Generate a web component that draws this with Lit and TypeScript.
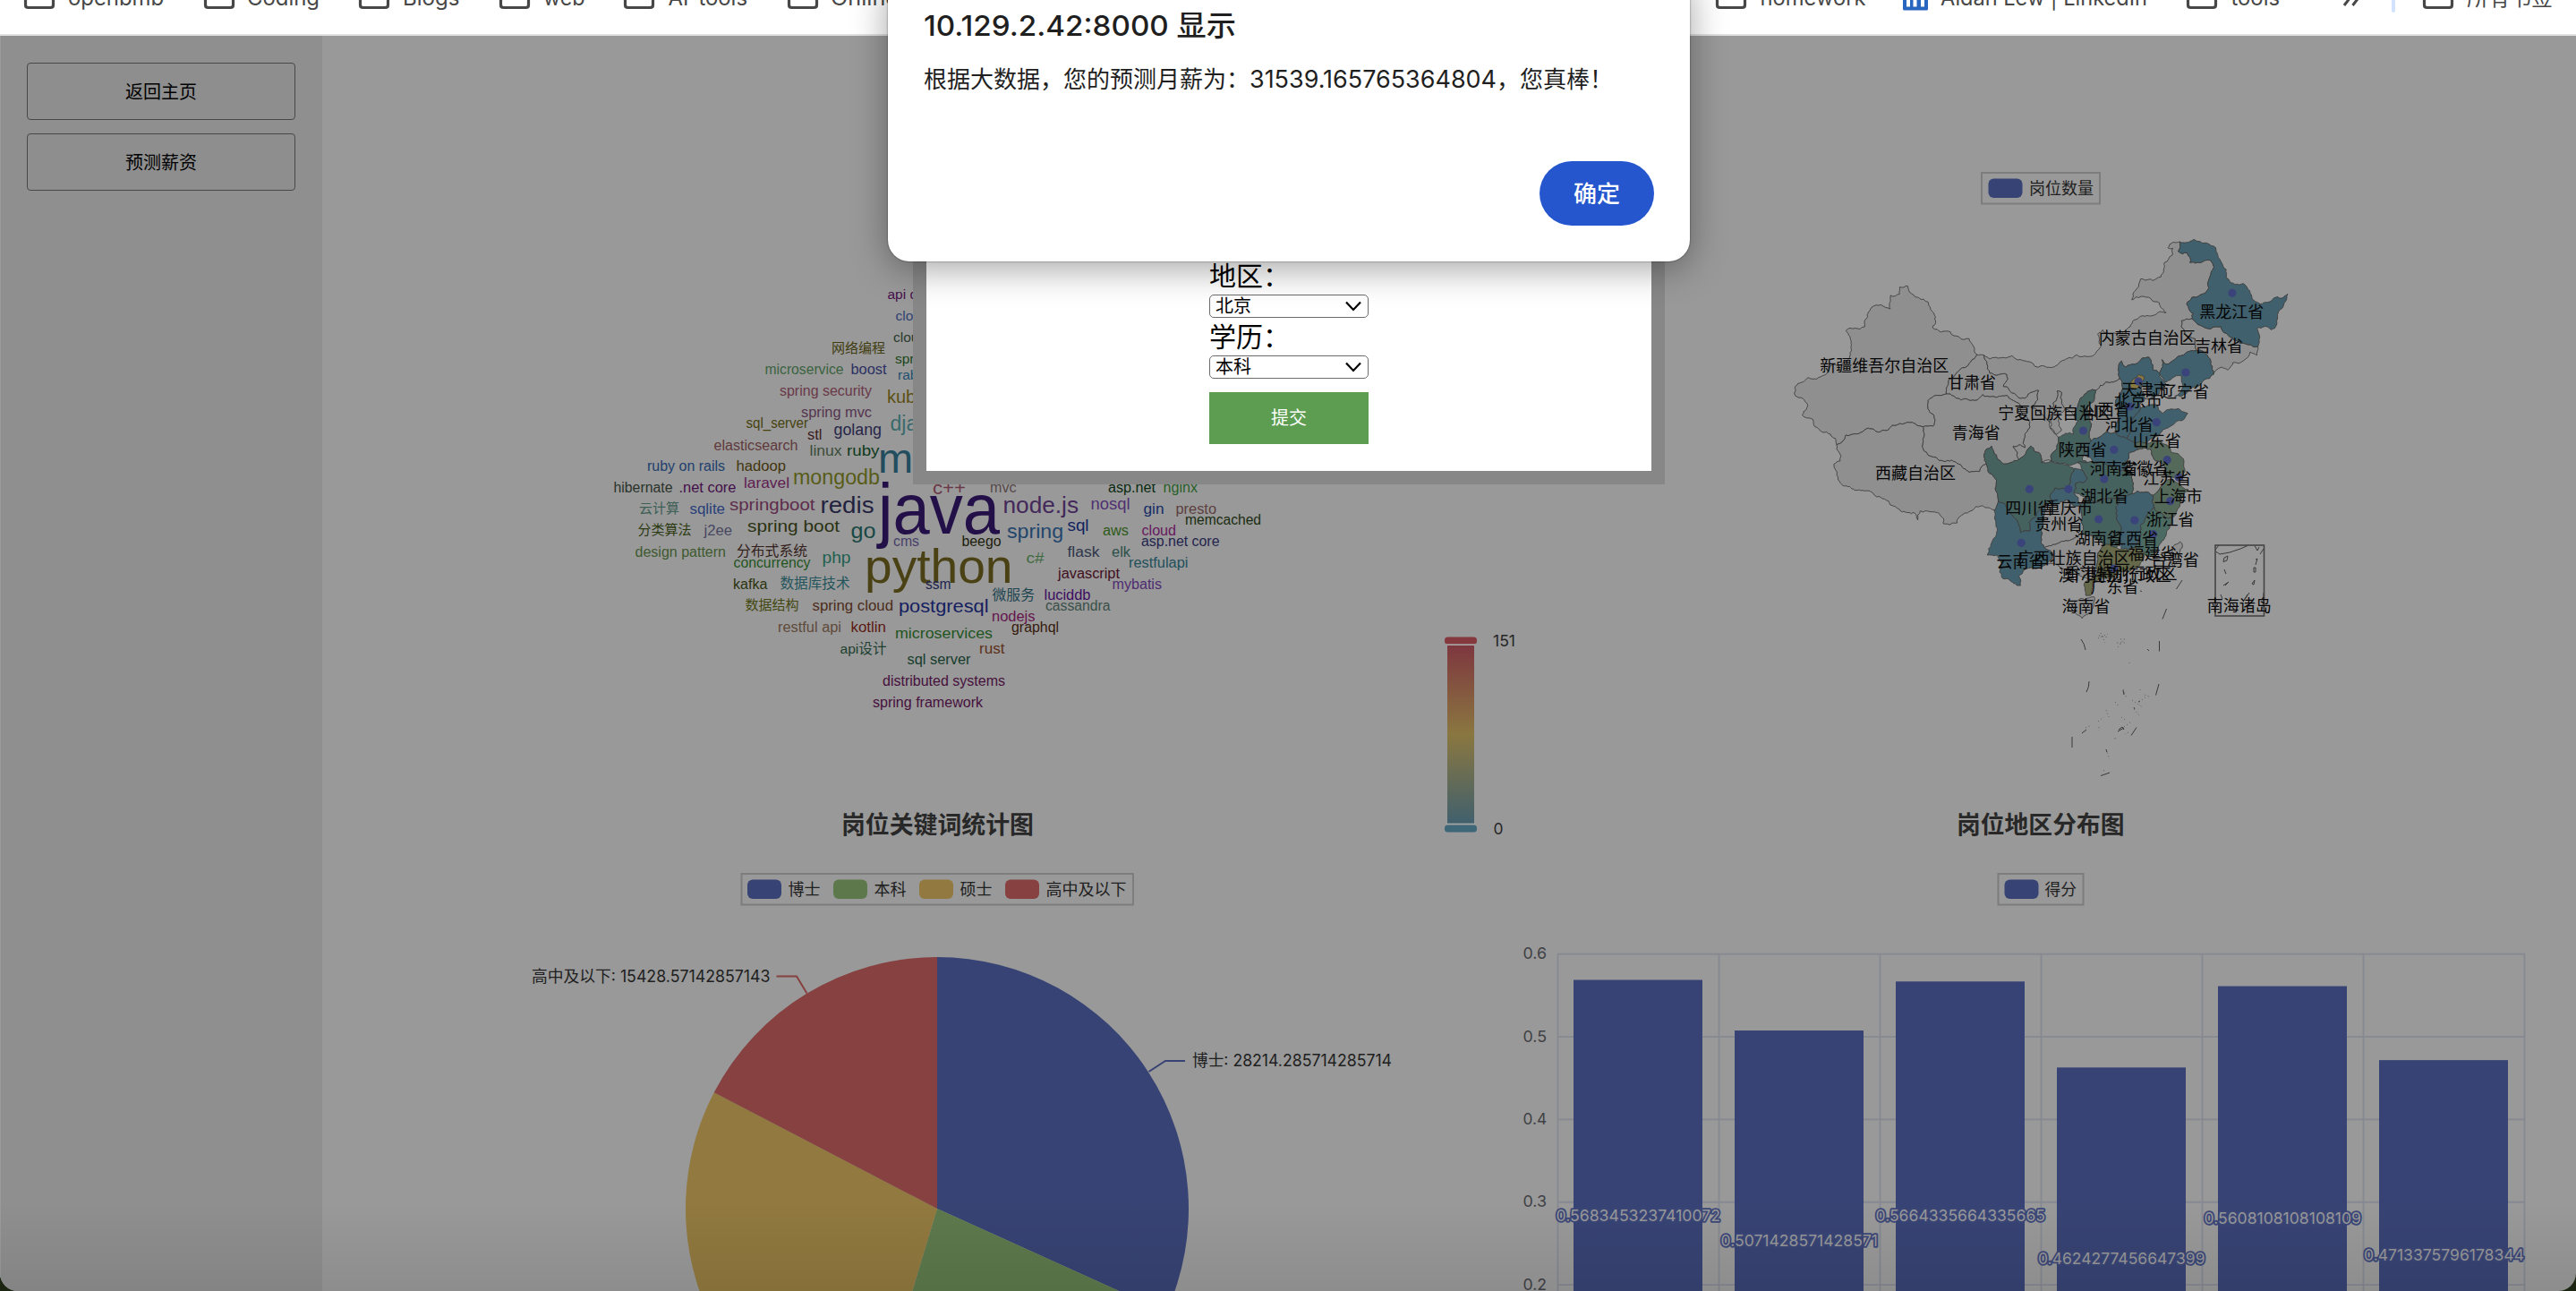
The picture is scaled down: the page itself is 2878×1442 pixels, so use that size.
import { LitElement, html, svg, css } from "lit";
import { customElement } from "lit/decorators.js";

/* ---------- shared helpers ---------- */

type Word = [text: string, x0: number, x1: number, baseline: number, size: number, color: string];

/** Text run that starts at x0 and, when x1 is given, is fitted to end at x1. */
const run = (t: string, x0: number, x1: number, y: number, size: number, color: string, cls = "t") =>
  x1 > 0
    ? svg`<text class=${cls} x=${x0} y=${y} font-size=${size} fill=${color} textLength=${x1 - x0} lengthAdjust="spacingAndGlyphs">${t}</text>`
    : svg`<text class=${cls} x=${x0} y=${y} font-size=${size} fill=${color}>${t}</text>`;

const chartText = css`
  :host { display: block; }
  svg { display: block; }
  .t { font-family: Inter, "Noto Sans CJK SC", sans-serif; }
  .w { font-family: "Liberation Sans", "Noto Sans CJK SC", sans-serif; stroke: currentColor; stroke-width: 0; }
  .title { font-family: Inter, "Noto Sans CJK SC", sans-serif; font-weight: 700; }
  .value { font-family: Inter, "Noto Sans CJK SC", sans-serif; paint-order: stroke; stroke: #3b4778; stroke-width: 3.6px; stroke-linejoin: round; }
`;

const BLUE = "#374374";
const GREEN = "#5d794c";
const YELLOW = "#91793f";
const RED = "#864140";

interface LegendEntry { label: string; color: string; x: number; tx: number; tx1: number }

const legend = (x: number, y: number, w: number, h: number, entries: LegendEntry[]) => svg`
  <rect x=${x} y=${y} width=${w} height=${h} fill="none" stroke="#7d7d7d" stroke-width="2"></rect>
  ${entries.map((e) => svg`
    <rect x=${e.x} y=${y + 6.5} width="38" height="21.5" rx="6" fill=${e.color}></rect>
    ${run(e.label, e.tx, e.tx1, y + 23.6, 18, "#202020")}`)}
`;

/* ---------- word cloud ---------- */

const WORDS: Word[] = [
  ["api design", 991.5, 0, 334, 15.5, "#46104c"],
  ["cloud native", 1000.5, 0, 358, 15.5, "#2f4270"],
  ["cloud computing", 998, 0, 382, 15.5, "#2a3a2e"],
  ["网络编程", 929, 989, 393.5, 15, "#3f3c10"],
  ["spring data", 1000, 0, 406, 15.5, "#1a4518"],
  ["microservice", 854.5, 942.5, 418, 15.8, "#3a6340"],
  ["boost", 950.5, 990.5, 418, 15.8, "#2a3062"],
  ["rabbitmq", 1003, 0, 424, 15.5, "#23506e"],
  ["spring security", 871, 974, 442, 15.8, "#6a3848"],
  ["kubernetes", 991, 0, 449.7, 20, "#5d5013"],
  ["spring mvc", 895, 974, 466, 15.8, "#54344f"],
  ["sql_server", 833.5, 903, 478, 15.8, "#46430f"],
  ["stl", 902, 918.5, 490.5, 15.8, "#3a1a20"],
  ["golang", 931.5, 985, 486, 18, "#26264a"],
  ["django", 994.5, 0, 481, 23, "#3b6a6c"],
  ["elasticsearch", 797.5, 891.5, 502.5, 15.8, "#5f3a3c"],
  ["linux", 904.5, 940.5, 509, 17, "#3a4d3a"],
  ["ruby", 946, 982.5, 509, 17, "#0f3a1c"],
  ["mysql", 981, 0, 527.5, 47, "#214d5e"],
  ["ruby on rails", 723, 810, 526, 15.8, "#20406e"],
  ["hadoop", 822.5, 878, 526, 15.8, "#42350e"],
  ["laravel", 831, 882, 544.5, 17, "#5f1d52"],
  ["mongodb", 886, 983, 541, 23, "#585c18"],
  ["hibernate", 685.5, 751.5, 550, 15.8, "#2a332a"],
  [".net core", 758.5, 822.5, 550, 15.8, "#44104a"],
  ["云计算", 714, 759, 572.5, 15, "#3d5f56"],
  ["sqlite", 770.5, 810, 574, 15.8, "#28407a"],
  ["springboot", 815, 910.5, 569.7, 19, "#5d2c4c"],
  ["redis", 916.5, 976.5, 572.7, 25, "#22223f"],
  ["java", 981, 1117, 595.7, 79, "#241048"],
  ["c++", 1042, 1079, 552, 20, "#6b3848"],
  ["分类算法", 712.5, 772.5, 596.5, 15, "#2c3a12"],
  ["j2ee", 786.5, 818, 598, 15.8, "#474762"],
  ["spring boot", 835, 938, 594, 19, "#2a3212"],
  ["go", 950.5, 978.5, 601, 23, "#184844"],
  ["cms", 998, 1027, 610, 15.8, "#473f6a"],
  ["design pattern", 709.5, 811, 622, 15.8, "#3e5a30"],
  ["分布式系统", 823, 902, 621, 15.6, "#33201a"],
  ["concurrency", 819.5, 905.5, 634, 15.8, "#1f5520"],
  ["php", 918.5, 950.5, 629, 18, "#1f6050"],
  ["python", 966, 1131.5, 651, 54, "#4a4214"],
  ["kafka", 819, 857.5, 658, 15.8, "#2a340f"],
  ["数据库技术", 871.5, 949.5, 657, 15.6, "#24555c"],
  ["ssm", 1034, 1062.5, 658, 15.8, "#1c2450"],
  ["数据结构", 832.5, 892.5, 681, 15, "#42480f"],
  ["spring cloud", 907.5, 998, 682, 15.8, "#4c2c1a"],
  ["postgresql", 1004, 1104.5, 684, 19.5, "#152060"],
  ["restful api", 869, 940, 706, 15.8, "#5f4a3a"],
  ["kotlin", 950.5, 990, 706, 15.8, "#5c1a12"],
  ["microservices", 1000, 1109, 713, 17, "#1f551f"],
  ["api设计", 938.5, 990.5, 730, 15.5, "#1c4030"],
  ["sql server", 1013.5, 1084.5, 742, 15.8, "#163c2c"],
  ["distributed systems", 986, 1123, 766, 15.8, "#46103c"],
  ["spring framework", 975, 1098, 790, 15.8, "#46103c"],
  ["mvc", 1106, 1135.5, 550, 15.8, "#574848"],
  ["asp.net", 1238, 1291, 550, 15.8, "#0a2a10"],
  ["nginx", 1299.5, 1338, 550, 15.8, "#286028"],
  ["node.js", 1120.5, 1205, 572.7, 25, "#43285a"],
  ["nosql", 1218.5, 1262.5, 569, 18, "#4f2f72"],
  ["gin", 1277.5, 1300.5, 574, 15.8, "#142c66"],
  ["presto", 1313.5, 1359, 574, 15.8, "#5c4040"],
  ["memcached", 1324, 1409, 586, 15.8, "#1a2c10"],
  ["spring", 1125, 1188, 601, 22, "#22466c"],
  ["sql", 1192.5, 1216.5, 593, 18, "#0e2260"],
  ["aws", 1232, 1261, 598, 15.8, "#2e5a18"],
  ["cloud", 1275.5, 1314, 598, 15.8, "#66185e"],
  ["asp.net core", 1275, 1362.5, 610, 15.8, "#24244e"],
  ["beego", 1074.5, 1118.5, 610, 15.8, "#1c1c0c"],
  ["flask", 1192.5, 1228.5, 622, 15.8, "#2e364a"],
  ["elk", 1242, 1263, 622, 15.8, "#2c504a"],
  ["c#", 1146.5, 1166.5, 629, 17, "#3e6a40"],
  ["restfulapi", 1261, 1327.5, 634, 15.8, "#22505c"],
  ["javascript", 1182, 1251, 646, 15.8, "#420f20"],
  ["mybatis", 1242.5, 1298, 658, 15.8, "#4f2c72"],
  ["微服务", 1108.5, 1156, 669.5, 15.8, "#1e4450"],
  ["luciddb", 1166.5, 1218.5, 670, 15.8, "#3e0c62"],
  ["cassandra", 1168, 1240.5, 682, 15.8, "#3a5048"],
  ["nodejs", 1108, 1156.5, 694, 15.8, "#66144e"],
  ["graphql", 1130, 1183, 706, 15.8, "#361a0c"],
  ["rust", 1094, 1122.5, 730, 15.8, "#5c3018"],
];

@customElement("word-cloud")
export class WordCloud extends LitElement {
  static styles = chartText;
  render() {
    return html`<svg width="1230" height="900" viewBox="360 40 1230 900">
      ${WORDS.map(([t, x0, x1, y, s, c]) => run(t, x0, x1, y, s, c, "w"))}
      ${run("岗位关键词统计图", 940, 1155, 931, 26.8, "#282828", "title")}
    </svg>`;
  }
}

/* ---------- region map ---------- */

type Pt = [number, number];

/** Map drawing space to chart pixels. */
const proj = ([x, y]: Pt): Pt => [1980 + x / 2.6133, 250 + y / 3];

const noise = (x: number, y: number) => {
  const v = Math.sin(x * 12.9898 + y * 78.233) * 43758.5453;
  return v - Math.floor(v) - 0.5;
};

/** Midpoint displacement; independent of direction, so that neighbours share one border. */
function between(a: Pt, b: Pt, depth: number): Pt[] {
  const len = Math.hypot(b[0] - a[0], b[1] - a[1]);
  if (len < 3.2 || depth > 4) return [];
  const flip = a[0] > b[0] || (a[0] === b[0] && a[1] > b[1]);
  const [p, q] = flip ? [b, a] : [a, b];
  const k = noise(p[0] + q[0], p[1] + q[1]) * 0.36;
  const m: Pt = [(p[0] + q[0]) / 2 - (q[1] - p[1]) * k, (p[1] + q[1]) / 2 + (q[0] - p[0]) * k];
  return [...between(a, m, depth + 1), m, ...between(m, b, depth + 1)];
}

function outline(flat: string): string {
  const pts = flat.trim().split(/\s+/).map((s) => proj(s.split(",").map(Number) as Pt));
  const out: Pt[] = [];
  pts.forEach((p, i) => out.push(p, ...between(p, pts[(i + 1) % pts.length], 0)));
  return "M" + out.map(([x, y]) => `${x.toFixed(1)} ${y.toFixed(1)}`).join("L") + "Z";
}

const LAND = "#8f8f8f";
const LOW = "#3f606c";
const MID = "#46625f";
const HIGH = "#55695a";

const REGIONS: [fill: string, points: string][] = [
  [LAND, "372,212 395,208 400,228 428,248 455,262 472,300 468,348 520,362 575,385 598,438 580,462 540,498 518,520 508,570 455,592 455,620 475,655 470,678 440,680 410,665 350,675 310,698 270,690 215,708 188,740 170,705 125,680 118,655 88,640 100,600 65,570 75,535 105,515 130,520 165,480 225,450 230,400 215,358 270,345 272,320 290,280 345,285 345,240 372,235"],
  [LAND, "188,740 215,708 270,690 310,698 350,675 410,665 440,680 440,735 455,775 500,795 545,805 575,832 605,830 625,805 655,860 660,930 648,960 615,945 580,962 560,970 540,1002 500,1005 498,985 470,965 432,962 425,992 415,968 380,965 345,942 305,915 278,895 240,892 190,845 180,805 198,795 195,765"],
  [LAND, "598,438 618,440 635,500 685,505 688,520 675,545 725,585 755,565 778,558 775,590 755,615 790,640 810,665 820,695 835,715 835,735 820,765 815,795 785,800 782,770 755,745 740,770 720,790 703,745 720,740 738,750 735,720 752,680 745,650 725,610 700,590 685,575 650,580 615,572 590,592 550,590 520,570 508,570 518,520 540,498 580,462"],
  [LAND, "455,592 508,570 520,570 550,590 590,592 615,572 650,580 685,575 700,590 725,610 745,650 752,680 735,720 738,750 720,740 703,745 720,790 695,800 670,800 655,775 640,745 625,755 625,805 605,830 575,832 545,805 500,795 455,775 440,735 440,680 470,678 475,655 455,620"],
  [LAND, "618,440 700,442 750,462 797,478 860,452 920,445 960,410 950,370 965,355 1010,365 1045,345 1075,310 1125,298 1150,298 1130,265 1105,250 1050,255 1055,230 1075,185 1110,190 1135,178 1145,130 1168,105 1170,82 1155,80 1170,62 1190,60 1185,92 1212,98 1220,130 1280,122 1290,145 1275,185 1275,215 1250,238 1210,270 1230,300 1225,318 1195,325 1205,370 1235,385 1240,425 1200,440 1150,470 1138,455 1130,500 1112,490 1100,447 1080,450 1060,470 1032,480 1020,460 1010,490 1015,520 975,530 945,558 910,575 895,600 880,640 855,620 845,600 845,565 832,560 820,600 828,630 808,640 810,665 790,640 755,615 775,590 778,558 755,565 725,585 675,545 688,520 685,505 635,500"],
  [LAND, "832,560 845,565 845,600 855,620 835,660 845,690 830,705 812,685 808,640 828,630 820,600"],
  [LAND, "1225,318 1250,340 1310,345 1320,365 1350,390 1390,405 1418,412 1415,440 1395,430 1380,455 1345,465 1330,490 1312,480 1288,505 1280,470 1270,440 1240,425 1235,385 1205,370 1195,325"],
  [LAND, "945,558 975,530 1015,520 1022,545 1020,570 1002,600 1010,650 1005,700 960,712 930,730 925,700 932,670 920,620 940,590"],
  [LAND, "1070,755 1105,755 1115,790 1135,800 1150,840 1150,860 1135,880 1110,910 1085,900 1050,905 1055,870 1035,820 1035,800 1040,770"],
  [LAND, "790,945 820,940 860,925 880,945 900,940 905,990 905,1035 880,1055 835,1070 795,1085 785,1050 790,1000 800,960"],
  [LAND, "795,1085 835,1070 880,1055 905,1035 950,1055 965,1080 950,1110 950,1160 930,1190 900,1180 850,1170 840,1150 800,1140 820,1110"],
  [LOW, "1190,60 1230,52 1270,65 1295,80 1312,130 1325,180 1340,198 1375,200 1395,225 1410,260 1450,262 1465,248 1505,235 1495,265 1480,290 1475,320 1458,355 1415,350 1418,412 1390,405 1350,390 1320,365 1310,345 1250,340 1225,318 1230,300 1210,270 1250,238 1275,215 1275,185 1290,145 1280,122 1220,130 1212,98 1185,92"],
  [LOW, "1240,425 1270,440 1280,470 1288,505 1240,545 1195,578 1175,578 1200,545 1195,510 1175,512 1150,530 1130,500 1138,455 1150,470 1200,440"],
  [LOW, "1010,490 1020,460 1032,480 1060,470 1080,450 1100,447 1112,490 1130,500 1150,540 1130,570 1090,585 1075,620 1055,650 1050,670 1045,690 1035,720 1005,700 1010,650 1002,600 1020,570 1022,545 1015,520"],
  ["#877940", "1045,540 1055,520 1070,505 1088,515 1080,540 1065,552 1048,550"],
  [LAND, "1080,540 1100,545 1110,580 1088,585 1078,560"],
  [MID, "945,558 940,590 920,620 932,670 925,700 930,730 910,775 905,790 920,800 890,800 840,805 815,795 820,765 835,735 835,715 880,705 895,660 880,640 895,600 910,575"],
  [LOW, "1055,650 1075,620 1120,605 1140,635 1165,620 1200,630 1213,635 1205,650 1160,680 1130,710 1090,735 1060,735 1035,720 1045,690 1050,670"],
  [LOW, "930,730 960,712 1005,700 1035,720 1060,735 1070,755 1040,770 1035,800 1035,820 985,810 940,800 910,775"],
  [HIGH, "1060,735 1090,735 1110,730 1150,740 1185,770 1205,830 1200,860 1170,850 1150,840 1135,800 1115,790 1105,755 1070,755"],
  [HIGH, "1135,880 1150,860 1190,870 1215,890 1195,920 1190,945 1165,985 1135,970 1115,950 1110,910"],
  [MID, "890,800 920,800 940,800 985,810 1035,820 1055,870 1050,905 1010,915 985,920 920,920 880,900 885,870 920,855 905,825"],
  [LOW, "880,820 905,825 920,855 885,870 880,900 900,940 880,945 860,925 820,940 812,905 825,885 860,882 870,860"],
  [MID, "625,755 640,745 655,775 670,800 695,800 720,790 740,770 755,745 782,770 785,800 840,805 880,820 870,860 860,882 825,885 812,905 820,940 790,945 770,980 750,1000 752,1030 725,1035 700,975 660,930 655,860 625,805"],
  [MID, "900,940 920,920 985,920 1010,915 1005,990 1015,1060 1005,1085 965,1080 950,1055 905,1035 905,990"],
  [LOW, "1010,915 1050,905 1085,900 1110,910 1115,950 1095,975 1075,1010 1070,1060 1060,1085 1020,1090 1015,1060 1005,990"],
  ["#4a6a62", "1115,950 1135,970 1165,985 1160,1020 1145,1055 1125,1090 1100,1115 1085,1100 1060,1085 1070,1060 1075,1010 1095,975"],
  ["#66694a", "965,1080 1005,1085 1020,1090 1060,1085 1085,1100 1080,1130 1060,1150 1030,1165 1005,1175 985,1190 950,1195 935,1205 930,1245 915,1245 910,1210 930,1190 950,1160 950,1110"],
  [LOW, "660,930 700,975 725,1035 752,1030 750,1000 770,980 790,945 800,960 790,1000 785,1050 795,1085 820,1110 800,1140 765,1155 735,1160 720,1180 725,1212 705,1205 670,1185 668,1150 655,1110 628,1110 640,1070 655,1040 650,990 648,960"],
  [LAND, "885,1265 940,1250 935,1290 905,1322 885,1305 875,1280"],
  [LAND, "1190,1065 1198,1080 1185,1130 1175,1150 1165,1110 1175,1075"],
];

const REGION_LABELS: [string, number, number][] = [
  ["新疆维吾尔自治区", 142, 495], ["甘肃省", 515, 553], ["青海省", 527, 720], ["西藏自治区", 303, 855],
  ["宁夏回族自治区", 662, 654], ["内蒙古自治区", 956, 403], ["黑龙江省", 1250, 315], ["吉林省", 1236, 430],
  ["辽宁省", 1137, 582], ["天津市", 1022, 575], ["北京市", 1000, 612], ["山西省", 906, 642],
  ["河北省", 975, 693], ["山东省", 1055, 747], ["陕西省", 838, 777], ["河南省", 930, 840],
  ["安徽省", 1020, 840], ["江苏省", 1085, 874], ["上海市", 1117, 933], ["湖北省", 902, 934],
  ["四川省", 683, 972], ["重庆市", 797, 972], ["浙江省", 1094, 1012], ["贵州省", 769, 1026],
  ["湖南省", 885, 1074], ["江西省", 988, 1075], ["福建省", 1042, 1125], ["台湾省", 1108, 1145],
  ["广西壮族自治区", 718, 1141], ["云南省", 657, 1152], ["澳门特别行政区", 838, 1196],
  ["香港特别行政区", 856, 1192], ["广东省", 932, 1237], ["海南省", 848, 1302], ["南海诸岛", 1272, 1300],
];

const DOTS: Pt[] = [
  [1343, 232], [1207, 498], [1069, 528], [1044, 612], [1122, 665], [908, 693], [998, 757], [1153, 791], [969, 855],
  [1187, 850], [751, 889], [865, 889], [1162, 929], [953, 990], [1058, 993], [1112, 1040], [727, 1069], [998, 1155],
];

const SEA_MARKS = `M2325 714Q2329 719 2330 726M2334 761Q2334 768 2331 773M2315 823V835M2347 866.500L2357 863
M2412.500 716V727.500M2412 764L2408.500 776.500M2387 812.500L2381 821.500M2420.500 680L2416 691.500M2438 648L2431.500 658
M2326 819L2331 815M2366 817L2373 813M2367 815L2371 812L2373 815M2399 725L2401 727M2372 771L2373 776
M2389 784L2391 783M2384 790L2385 792M2353 837L2354 840M2391 660L2393 660.500`;

const REEF_DOTS = `M2344 713L2355 708M2345 710L2356 712M2347 707L2352 718M2366 723L2373 714M2369 714H2376M2365 718L2375 718
M2363 784L2367 789M2372 770L2376 780M2390 784L2398 778M2382 782L2394 790M2384 792L2390 799M2353 793L2356 801
M2344 806L2350 801M2330 813L2337 810M2370 801L2374 804M2373 812L2381 806M2378 818L2374 820M2363 824V826
M2353 837L2357 848M2391 770V771M2396 776L2401 778M2345 812V816M2350 861L2352 860M2448 622L2453 618M2379 740V741`;

const INSET_MARKS = `M2475 614L2479 609M2475.500 616L2480 619L2491 617L2503 613L2511 609.500M2519 609.500L2522 615L2524 611
M2529 613L2525 619M2485 623L2489 621L2488 626L2484 627.500ZM2520 625L2522 624L2520 631M2485 636L2487 641
M2518 634H2520V639H2518ZM2484 654L2490 650L2486 654M2516 652L2519 648L2518 653ZM2481 664L2483 669
M2511 664L2506 672L2509 668L2513 662M2529 662L2528 680`;

@customElement("region-map")
export class RegionMap extends LitElement {
  static styles = [
    chartText,
    css`
      .region { stroke: #3e3e3e; stroke-width: 0.9; stroke-linejoin: round; }
      .mark { fill: none; stroke: #3a3a3a; stroke-width: 1; }
      .reef { fill: none; stroke: #5c5c5c; stroke-width: 0.9; stroke-dasharray: 1.2 2.6; }
      .inset { fill: none; stroke: #444; stroke-width: 1.6; }
      .dot { fill: #3a447a; }
    `,
  ];
  render() {
    return html`<svg width="1288" height="900" viewBox="1590 40 1288 900">
      <defs>
        <linearGradient id="scale" x1="0" y1="0" x2="0" y2="1">
          <stop offset="0" stop-color="#7e373f"></stop>
          <stop offset="0.5" stop-color="#8a7740"></stop>
          <stop offset="1" stop-color="#40606d"></stop>
        </linearGradient>
      </defs>
      ${legend(2214, 193, 132, 34.5, [{ label: "岗位数量", color: BLUE, x: 2221.5, tx: 2267, tx1: 2339 }])}

      <rect x="1614" y="711.500" width="36" height="8" rx="3.500" fill="#86383f"></rect>
      <rect x="1617" y="721" width="30" height="199" fill="url(#scale)"></rect>
      <rect x="1616" y="719.500" width="32" height="1.500" fill="#a6a0a0"></rect>
      <rect x="1616" y="919.600" width="32" height="1.500" fill="#a0a6a6"></rect>
      <rect x="1614" y="921.500" width="36" height="8" rx="3.500" fill="#3e6778"></rect>
      ${run("151", 1668, 1693, 722, 17.5, "#262626")}
      ${run("0", 1668.5, 1679.5, 931.5, 17.5, "#262626")}

      ${REGIONS.map(([fill, pts]) => svg`<path class="region" fill=${fill} d=${outline(pts)}></path>`)}
      ${DOTS.map((p) => { const [x, y] = proj(p); return svg`<circle class="dot" cx=${x} cy=${y} r="4.600"></circle>`; })}
      <path class="mark" d=${SEA_MARKS}></path>
      <path class="reef" d=${REEF_DOTS}></path>
      <path class="mark" d=${INSET_MARKS}></path>
      <rect class="inset" x="2475" y="609" width="54.500" height="79"></rect>
      ${REGION_LABELS.map(([t, lx, ly]) => { const [x, y] = proj([lx, ly]); return run(t, x - 1, 0, y, 18, "#050505"); })}
      ${run("岗位地区分布图", 2186, 2373.5, 931, 26.8, "#282828", "title")}
    </svg>`;
  }
}

/* ---------- salary pie ---------- */

@customElement("salary-pie")
export class SalaryPie extends LitElement {
  static styles = chartText;
  private slices: [number, number, string][] = [
    [0, 114.35, BLUE], [114.35, 196.8, GREEN], [196.8, 297.5, YELLOW], [297.5, 360, RED],
  ];
  private slice(a: number, b: number) {
    const cx = 1047, cy = 1350, r = 281;
    const at = (d: number) => {
      const t = (d * Math.PI) / 180;
      return `${(cx + r * Math.sin(t)).toFixed(2)} ${(cy - r * Math.cos(t)).toFixed(2)}`;
    };
    return `M${cx} ${cy}L${at(a)}A${r} ${r} 0 0 1 ${at(b)}Z`;
  }
  render() {
    return html`<svg width="1230" height="502" viewBox="360 940 1230 502">
      ${legend(828.5, 976, 437.5, 34.5, [
        { label: "博士", color: BLUE, x: 835, tx: 880.5, tx1: 916.5 },
        { label: "本科", color: GREEN, x: 931, tx: 976.5, tx1: 1012.5 },
        { label: "硕士", color: YELLOW, x: 1027, tx: 1072.5, tx1: 1108.5 },
        { label: "高中及以下", color: RED, x: 1123, tx: 1168.5, tx1: 1258.5 },
      ])}
      ${this.slices.map(([a, b, c]) => svg`<path d=${this.slice(a, b)} fill=${c}></path>`)}
      <path d="M867.500 1090.500H890L901.500 1109.500" fill="none" stroke=${RED} stroke-width="2"></path>
      <path d="M1324 1185H1302L1283.500 1197" fill="none" stroke=${BLUE} stroke-width="2"></path>
      ${run("高中及以下: 15428.57142857143", 594, 860.5, 1096.7, 18, "#202020")}
      ${run("博士: 28214.285714285714", 1332, 1555, 1190.7, 18, "#202020")}
    </svg>`;
  }
}

/* ---------- score bars ---------- */

@customElement("score-bars")
export class ScoreBars extends LitElement {
  static styles = chartText;
  private values: [string, number, number][] = [
    ["0.5683453237410072", 1738.5, 1922], ["0.5071428571428571", 1922.5, 2098],
    ["0.5664335664335665", 2095.5, 2285], ["0.4624277456647399", 2277, 2463.5],
    ["0.5608108108108109", 2462.5, 2638], ["0.4713375796178344", 2641, 2820],
  ];
  private y(v: number) { return 1065.7 + (0.6 - v) * 923.5; }
  render() {
    return html`<svg width="1288" height="502" viewBox="1590 940 1288 502">
      ${legend(2232.5, 976, 95, 34.5, [{ label: "得分", color: BLUE, x: 2239.5, tx: 2284.5, tx1: 2320 }])}
      ${[0.6, 0.5, 0.4, 0.3, 0.2].map((v) => svg`
        <line x1="1740" x2="2821" y1=${this.y(v)} y2=${this.y(v)} stroke="#868892" stroke-width="1.800"></line>
        ${run(v.toFixed(1), 1701.5, 1728, this.y(v) + 5.5, 17.8, "#404145")}`)}
      ${[0, 1, 2, 3, 4, 5, 6].map((i) => svg`
        <line x1=${1740.5 + i * 180} x2=${1740.5 + i * 180} y1="1065" y2="1442" stroke="#868892" stroke-width="1.800"></line>`)}
      ${this.values.map(([t], i) => svg`
        <rect x=${1758 + i * 180} y=${this.y(Number(t)) - 0.4} width="144" height="560" fill=${BLUE}></rect>`)}
      ${this.values.map(([t, x0, x1]) => run(t, x0, x1, (this.y(Number(t)) + this.y(0)) / 2 + 6.2, 17.8, "#989898", "value"))}
    </svg>`;
  }
}

/* ---------- page ---------- */

interface Bookmark { label: string; start: number; t0: number; t1: number; kind: "folder" | "linkedin" | "more" | "divider" }

const BOOKMARKS: Bookmark[] = [
  { label: "openbmb", start: 27, t0: 76, t1: 183, kind: "folder" },
  { label: "Coding", start: 228, t0: 276, t1: 357, kind: "folder" },
  { label: "Blogs", start: 401, t0: 450, t1: 513.5, kind: "folder" },
  { label: "web", start: 557.5, t0: 606.5, t1: 653, kind: "folder" },
  { label: "AI-tools", start: 697, t0: 746.5, t1: 835, kind: "folder" },
  { label: "Online", start: 880, t0: 928, t1: 1004, kind: "folder" },
  { label: "homework", start: 1916.5, t0: 1966, t1: 2084, kind: "folder" },
  { label: "Aidan Lew | LinkedIn", start: 2126, t0: 2168, t1: 2399, kind: "linkedin" },
  { label: "tools", start: 2443, t0: 2492.5, t1: 2547, kind: "folder" },
  { label: "", start: 2616, t0: 0, t1: 0, kind: "more" },
  { label: "", start: 2672, t0: 0, t1: 0, kind: "divider" },
  { label: "所有书签", start: 2707, t0: 2756, t1: 2852, kind: "folder" },
];

@customElement("app-root")
export class AppRoot extends LitElement {
  static styles = css`
    :host {
      display: block; position: relative; width: 2878px; height: 1442px; overflow: hidden;
      background: #1b2512; font-family: Inter, "Noto Sans CJK SC", sans-serif; color: #000;
    }
    .window {
      display: flex; flex-direction: column; height: 1442px; overflow: hidden;
      background: #999; border-radius: 0 0 20px 20px;
    }
    .bookmarks {
      display: flex; flex: none; box-sizing: border-box; height: 40px;
      background: #fff; border-bottom: 2px solid #e0e0e0;
    }
    .bookmarks svg { display: block; flex: none; overflow: visible; }
    .bm { font-family: Inter, "Noto Sans CJK SC", sans-serif; font-weight: 400; fill: #474747; }
    .body { display: flex; flex: 1; min-height: 0; }
    .sidebar {
      display: flex; flex-direction: column; gap: 15px; flex: none; box-sizing: border-box;
      width: 360px; padding: 30px; background: #8f8f8f; border-left: 1px solid #9b9b9b;
    }
    .nav {
      box-sizing: border-box; height: 64px; margin: 0 0 0 -1px; padding: 2px 0 0; border: 1px solid #484848; border-radius: 4px;
      background: #8e8e8e; color: #000; font: 400 20px/60px Inter, "Noto Sans CJK SC", sans-serif;
    }
    .charts { display: grid; grid-template-columns: 1230px 1288px; grid-template-rows: 900px 502px; }
    .shade {
      position: absolute; left: 0; right: 0; bottom: 0; height: 100px; pointer-events: none;
      background: linear-gradient(to bottom, rgba(0, 0, 0, 0), rgba(0, 0, 0, 0.08));
      border-radius: 0 0 20px 20px;
    }
    .modal {
      position: absolute; left: 1020px; top: 40px; box-sizing: border-box; width: 840px; height: 501px;
      padding: 0 15px 15px; background: #878787;
    }
    .panel {
      display: flex; flex-direction: column; align-items: center; justify-content: flex-end; box-sizing: border-box;
      height: 486px; padding-bottom: 30px; background: #fff;
    }
    .form { display: flex; flex-direction: column; width: 178px; }
    .label { height: 42px; font-size: 30px; line-height: 42px; white-space: nowrap; }
    .select {
      display: flex; align-items: center; justify-content: space-between; box-sizing: border-box; height: 26px;
      padding: 0 6px; border: 1.5px solid #6c6c6c; border-radius: 5px; background: #fff; font-size: 20px; line-height: 24px;
    }
    .submit {
      height: 58px; margin: 15px 0 0; padding: 1px 0 0; border: 0; background: #5d9d52; color: #fff;
      font: 400 20px/57px Inter, "Noto Sans CJK SC", sans-serif;
    }
    .dialog {
      position: absolute; left: 992px; top: -30px; display: flex; flex-direction: column; box-sizing: border-box;
      width: 896px; height: 322px; padding: 37px 40px 40px; border-radius: 24px; background: #fff; color: #1f1f1f;
      box-shadow: 0 0 2px rgba(0, 0, 0, 0.6), 0 8px 40px rgba(0, 0, 0, 0.36);
    }
    .dialog svg { display: block; }
    .head { font-family: Inter, "Noto Sans CJK SC", sans-serif; font-weight: 500; fill: #1f1f1f; }
    .msg { font-family: Inter, "Noto Sans CJK SC", sans-serif; font-weight: 400; fill: #1f1f1f; }
    .ok {
      align-self: flex-end; width: 128px; height: 72px; margin: auto 0 0; padding: 2px 0 0; border: 0; border-radius: 36px;
      background: #2656cd; color: #fff; font: 500 26px/70px Inter, "Noto Sans CJK SC", sans-serif;
    }
  `;

  private bookmark(b: Bookmark, i: number) {
    const end = BOOKMARKS[i + 1]?.start ?? 2878;
    const start = i === 0 ? 0 : b.start;
    const s = b.start;
    const icon = {
      folder: svg`<path d="M${s + 1.5} -14V5.500Q${s + 1.5} 8.500 ${s + 4.5} 8.500H${s + 29.5}Q${s + 32.5} 8.500 ${s + 32.5} 5.500V-14" fill="none" stroke="#474747" stroke-width="3.200"></path>`,
      linkedin: svg`<path d="M${s} -14H${s + 28}V10Q${s + 28} 11.500 ${s + 26.5} 11.500H${s + 1.5}Q${s} 11.500 ${s} 10Z" fill="#2a66c0"></path>
        <path d="M${s + 6} -8V7.500M${s + 13.5} -8V7.500M${s + 22} -8V7.500" fill="none" stroke="#fff" stroke-width="4"></path>`,
      more: svg`<path d="M${s + 3} 6L${s + 10} -3L${s + 3} -12M${s + 12.5} 6L${s + 19.5} -3L${s + 12.5} -12" fill="none" stroke="#474747" stroke-width="3"></path>`,
      divider: svg`<path d="M${s + 2} -10V12" stroke="#d3e3fd" stroke-width="4" stroke-linecap="round"></path>`,
    }[b.kind];
    return html`<svg width=${end - start} height="38" viewBox="${start} 0 ${end - start} 38">
      ${icon}
      ${b.label ? run(b.label, b.t0, b.t1, 6, 24, "#474747", "bm") : ""}
    </svg>`;
  }

  private select(value: string) {
    return html`<div class="select"><span>${value}</span>
      <svg width="20" height="12" viewBox="0 0 20 12"><path d="M2 1.500L10 10L18 1.500" fill="none" stroke="#000" stroke-width="2.200"></path></svg>
    </div>`;
  }

  render() {
    return html`
      <div class="window">
        <div class="bookmarks">${BOOKMARKS.map((b, i) => this.bookmark(b, i))}</div>
        <div class="body">
          <nav class="sidebar">
            <button class="nav">返回主页</button>
            <button class="nav">预测薪资</button>
          </nav>
          <main class="charts">
            <word-cloud></word-cloud>
            <region-map></region-map>
            <salary-pie></salary-pie>
            <score-bars></score-bars>
          </main>
        </div>
      </div>
      <div class="shade"></div>
      <div class="modal">
        <div class="panel">
          <div class="form">
            <div class="label">地区：</div>
            ${this.select("北京")}
            <div class="label">学历：</div>
            ${this.select("本科")}
            <button class="submit">提交</button>
          </div>
        </div>
      </div>
      <div class="dialog">
        <svg width="816" height="110" viewBox="0 0 816 110">
          ${run("10.129.2.42:8000 显示", 0, 349, 32.5, 31.5, "#1f1f1f", "head")}
          ${run("根据大数据，您的预测月薪为：", 0, 364, 91, 26, "#1f1f1f", "msg")}
          ${run("31539.165765364804", 364, 640, 91, 26.5, "#1f1f1f", "msg")}
          ${run("，您真棒！", 640, 770, 91, 26, "#1f1f1f", "msg")}
        </svg>
        <button class="ok">确定</button>
      </div>
    `;
  }
}
